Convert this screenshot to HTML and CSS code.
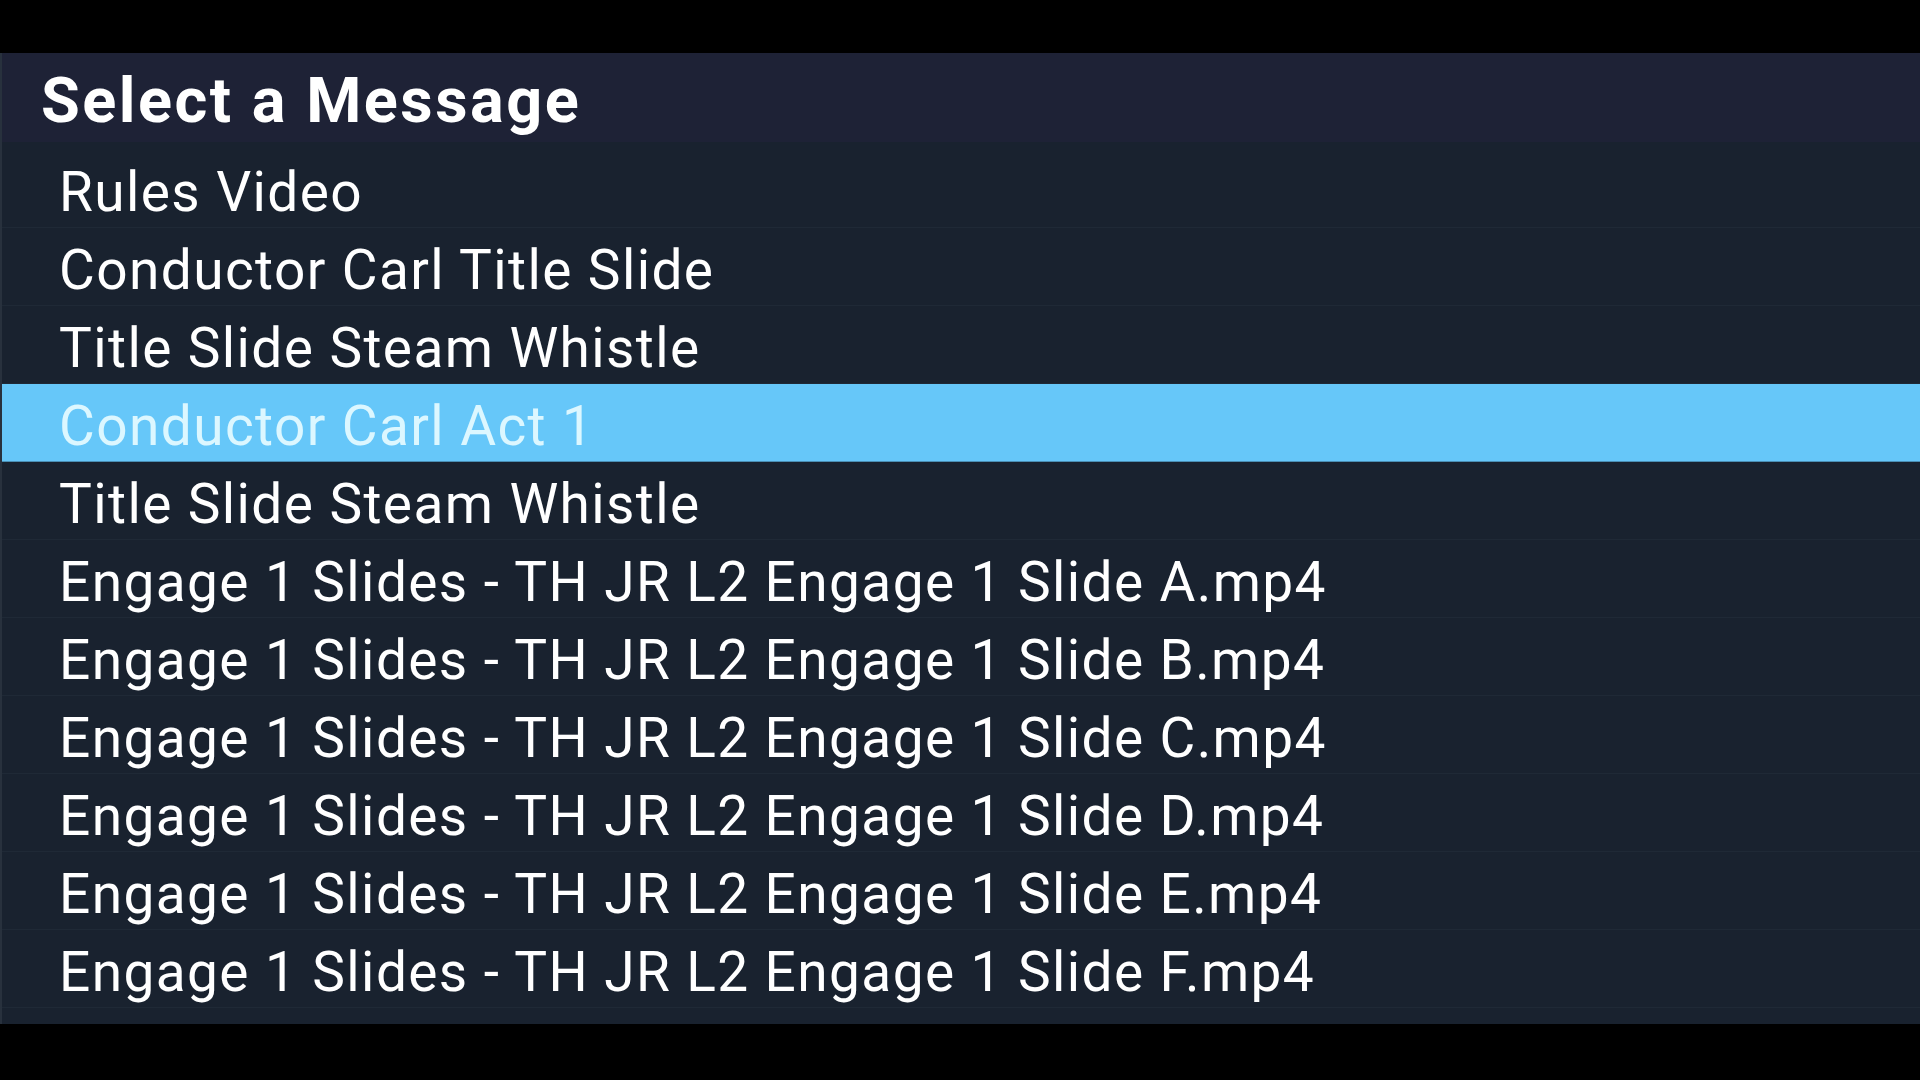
FILE: index.html
```html
<!DOCTYPE html>
<html lang="en">
<head>
    <meta charset="UTF-8">
    <meta name="viewport" content="width=device-width, initial-scale=1.0">
    <title>Select a Message</title>
    <link rel="stylesheet" href="styles.css">
</head>
<body>
    <div class="dialog">
        <div class="dialog-title">Select a Message</div>
        <div class="message-list">
            <div class="message-item">Rules Video</div>
            <div class="message-item">Conductor Carl Title Slide</div>
            <div class="message-item">Title Slide Steam Whistle</div>
            <div class="message-item selected">Conductor Carl Act 1</div>
            <div class="message-item">Title Slide Steam Whistle</div>
            <div class="message-item">Engage 1 Slides - TH JR L2 Engage 1 Slide A.mp4</div>
            <div class="message-item">Engage 1 Slides - TH JR L2 Engage 1 Slide B.mp4</div>
            <div class="message-item">Engage 1 Slides - TH JR L2 Engage 1 Slide C.mp4</div>
            <div class="message-item">Engage 1 Slides - TH JR L2 Engage 1 Slide D.mp4</div>
            <div class="message-item">Engage 1 Slides - TH JR L2 Engage 1 Slide E.mp4</div>
            <div class="message-item">Engage 1 Slides - TH JR L2 Engage 1 Slide F.mp4</div>
        </div>
    </div>
</body>
</html>
```

FILE: styles.css
```css
body {
    margin: 0;
    background-color: #000;
    font-family: Roboto, "Liberation Sans", sans-serif;
    height: 100vh;
    overflow: hidden;
}
.dialog {
    display: flex;
    flex-direction: column;
    margin-top: 53px;
    height: 971px;
    background-color: #19222f;
    border-left: 2px solid #28313d;
}
.dialog-title {
    height: 89px;
    display: flex;
    align-items: center;
    padding-left: 39px;
    padding-top: 6px;
    box-sizing: border-box;
    background-color: #1e2236;
    color: #fff;
    font-size: 63px;
    font-weight: bold;
    letter-spacing: 2.5px;
}
.message-list {
    display: flex;
    flex-direction: column;
    padding-top: 8px;
}
.message-item {
    display: flex;
    align-items: center;
    padding-left: 57px;
    padding-top: 6px;
    box-sizing: border-box;
    height: 78px;
    border-bottom: 1px solid #1f2936;
    color: #fff;
    font-size: 55px;
    letter-spacing: 1.4px;
}
.message-item.selected {
    background-color: #66c7f9;
    color: #dcf7ff;
    border-bottom-color: #4a8fb5;
}
```
